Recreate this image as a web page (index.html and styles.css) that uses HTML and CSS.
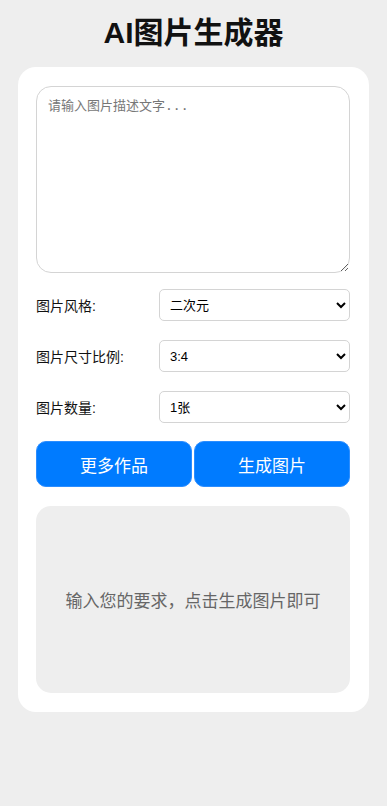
FILE: index.html
```html
<!DOCTYPE html>
<html lang="zh-CN">
  <head>
    <meta charset="UTF-8" />
    <meta name="viewport" content="width=device-width, initial-scale=1.0" />
    <title>AI图片生成器</title>
    <link rel="stylesheet" href="styles.css">
  </head>
  <body>
    <h1>AI图片生成器</h1>
    <div class="container">
      <textarea id="prompt" placeholder="请输入图片描述文字..."></textarea>

      <div class="row">
        <label for="style">图片风格:</label>
        <select id="style">
          <option>二次元</option>
          <option>写实</option>
          <option>油画</option>
        </select>
      </div>
      <div class="row">
        <label for="ratio">图片尺寸比例:</label>
        <select id="ratio">
          <option>3:4</option>
          <option>1:1</option>
          <option>16:9</option>
        </select>
      </div>
      <div class="row">
        <label for="count">图片数量:</label>
        <select id="count">
          <option>1张</option>
          <option>2张</option>
          <option>4张</option>
        </select>
      </div>

      <div class="buttons">
        <button>更多作品</button>
        <button>生成图片</button>
      </div>

      <div id="resultado">输入您的要求，点击生成图片即可</div>
    </div>
  </body>
</html>
```
FILE: styles.css
```css
body {
  font-family: "Liberation Sans", "Noto Sans CJK SC", sans-serif;
  background: #eeeeee;
  margin: 0;
  padding: 14px 18px 40px;
}
h1 {
  font-size: 30px;
  font-weight: bold;
  text-align: center;
  color: #111;
  margin: 0 0 15px;
  line-height: 38px;
}
.container {
  background: white;
  padding: 19px 19px 19px 18px;
  border-radius: 18px;
}
textarea {
  display: block;
  box-sizing: border-box;
  width: 100%;
  height: 187px;
  padding: 8px 11px;
  font-family: "DejaVu Sans Mono", "Noto Sans CJK SC", monospace;
  font-size: 13px;
  border: 1px solid #d4d4d4;
  border-radius: 15px;
  resize: vertical;
}
textarea::placeholder {
  color: #777;
}
.row {
  display: flex;
  align-items: center;
  margin-top: 16px;
}
.row + .row {
  margin-top: 19px;
}
.row label {
  flex: 1;
  font-size: 14px;
  color: #111;
}
.row select {
  width: 191px;
  height: 32px;
  padding: 0 6px;
  font-family: "Liberation Sans", "Noto Sans CJK SC", sans-serif;
  font-size: 13px;
  color: #000;
  background: white;
  border: 1px solid #d4d4d4;
  border-radius: 5px;
}
.buttons {
  display: flex;
  gap: 2px;
  margin-top: 18px;
}
.buttons button {
  flex: 1;
  height: 46px;
  background-color: #007bff;
  color: white;
  border: 1px solid #2b8dff;
  border-radius: 10px;
  font-family: "Liberation Sans", "Noto Sans CJK SC", sans-serif;
  font-size: 17px;
  cursor: pointer;
}
#resultado {
  margin-top: 19px;
  height: 187px;
  background: #eeeeee;
  border-radius: 15px;
  display: flex;
  align-items: center;
  justify-content: center;
  font-size: 17px;
  color: #666;
}
```
